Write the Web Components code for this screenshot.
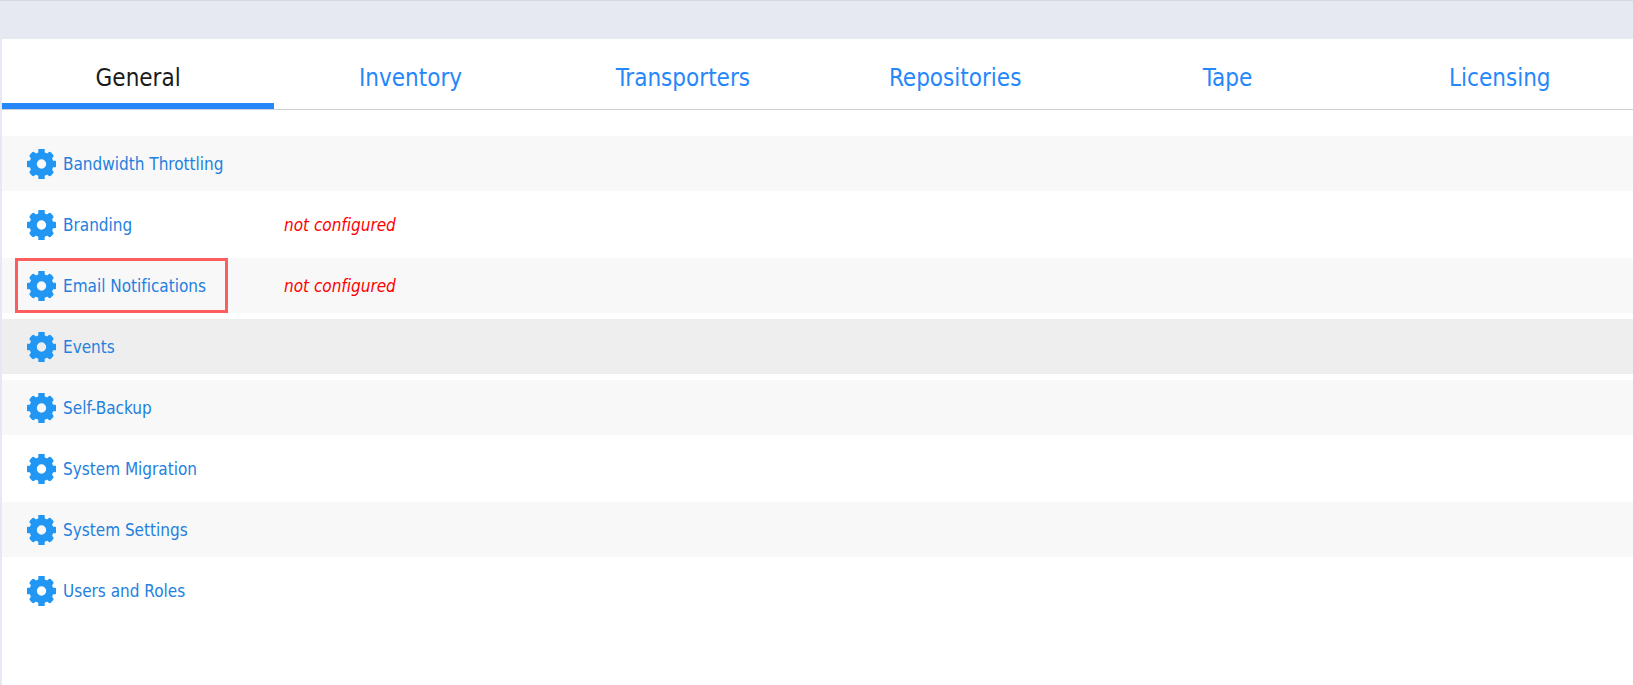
<!DOCTYPE html>
<html lang="en">
<head>
<meta charset="utf-8">
<title>Settings</title>
<style>
  html, body { margin: 0; min-height: 100%; }
  body {
    background: #e6e9f1;
    font-family: "DejaVu Sans Condensed", Tahoma, Verdana, sans-serif;
    font-variant-ligatures: none;
  }
</style>
</head>
<body>
<settings-page>
  <tab-strip slot="tabs">
    <tab-item selected>General</tab-item>
    <tab-item>Inventory</tab-item>
    <tab-item>Transporters</tab-item>
    <tab-item>Repositories</tab-item>
    <tab-item>Tape</tab-item>
    <tab-item>Licensing</tab-item>
  </tab-strip>
  <settings-row striped>Bandwidth Throttling</settings-row>
  <settings-row>Branding<span slot="status">not configured</span></settings-row>
  <settings-row striped marked>Email Notifications<span slot="status">not configured</span></settings-row>
  <settings-row hovered>Events</settings-row>
  <settings-row striped>Self-Backup</settings-row>
  <settings-row>System Migration</settings-row>
  <settings-row striped>System Settings</settings-row>
  <settings-row>Users and Roles</settings-row>
</settings-page>

<script>
function define(name, html, setup) {
  const template = document.createElement('template');
  template.innerHTML = html;
  customElements.define(name, class extends HTMLElement {
    constructor() {
      super();
      this.attachShadow({ mode: 'open' }).append(template.content.cloneNode(true));
    }
    connectedCallback() {
      if (setup) setup(this, this.shadowRoot);
    }
  });
}

define('settings-page', `
  <style>
    :host {
      display: flex; flex-direction: column; box-sizing: border-box;
      min-height: 100vh; border-top: 1px solid #d6dade;
      padding: 38px 0 0 2px;
    }
    main { flex: 1; background: #fff; }
    section { display: flex; flex-direction: column; gap: 6px; padding: 26px 0; }
  </style>
  <main>
    <slot name="tabs"></slot>
    <section><slot></slot></section>
  </main>`);

define('tab-strip', `
  <style>
    :host { display: block; overflow: hidden; }
    div {
      display: grid; grid-template-columns: repeat(6, 1fr);
      margin-right: -3px; border-bottom: 1px solid #ccd1d4;
    }
  </style>
  <div role="tablist"><slot></slot></div>`);

define('tab-item', `
  <style>
    :host { display: block; }
    button {
      display: block; box-sizing: border-box; width: 100%; height: 70px;
      margin: 0; padding: 14px 0 0; border: 0; border-bottom: 6px solid transparent;
      background: none; color: #2687fb; cursor: pointer;
      font: 24px/28px "DejaVu Sans Condensed", Tahoma, Verdana, sans-serif;
    }
    :host([selected]) button { color: #1b1b1b; border-bottom-color: #2687fb; }
  </style>
  <button type="button" role="tab"><slot></slot></button>`,
  (host, root) => root.querySelector('button')
    .setAttribute('aria-selected', host.hasAttribute('selected')));

define('gear-icon', `
  <style>:host, svg { display: block; }</style>
  <svg width="29" height="30" viewBox="0 0 29 30" aria-hidden="true">
    <g fill="#2196f3">
      <rect x="11.3" y="0" width="6.4" height="9" rx="0.6"/>
      <rect x="11.3" y="21" width="6.4" height="9" rx="0.6"/>
      <rect x="0" y="11.8" width="9" height="6.4" rx="0.6"/>
      <rect x="20" y="11.8" width="9" height="6.4" rx="0.6"/>
      <g transform="rotate(45 14.5 15)">
        <rect x="11.2" y="0.1" width="6.6" height="9" rx="2"/>
        <rect x="11.2" y="20.9" width="6.6" height="9" rx="2"/>
        <rect x="-0.4" y="11.7" width="9" height="6.6" rx="2"/>
        <rect x="20.4" y="11.7" width="9" height="6.6" rx="2"/>
      </g>
      <path fill-rule="evenodd" d="M14.5 3a12 12 0 1 0 0 24a12 12 0 1 0 0-24zM14.5 10.3a4.7 4.7 0 1 1 0 9.4a4.7 4.7 0 1 1 0-9.4z"/>
    </g>
  </svg>`);

define('settings-row', `
  <style>
    :host {
      display: grid; grid-template-columns: 269px 1fr; align-items: center;
      padding-left: 13px; font-size: 17px; line-height: 20px;
    }
    :host([striped]) { background: #f8f8f8; }
    :host([hovered]) { background: #eee; }
    a {
      display: flex; align-items: center; gap: 7px; justify-self: start;
      box-sizing: border-box; height: 55px; padding: 0 19px 0 9px;
      border: 3px solid transparent; color: #2480de; text-decoration: none;
    }
    :host([marked]) a { border-color: #fc5d5d; }
    em { color: #f00; font-style: italic; }
  </style>
  <a href="#"><gear-icon></gear-icon><span><slot></slot></span></a>
  <em><slot name="status"></slot></em>`);
</script>
</body>
</html>
